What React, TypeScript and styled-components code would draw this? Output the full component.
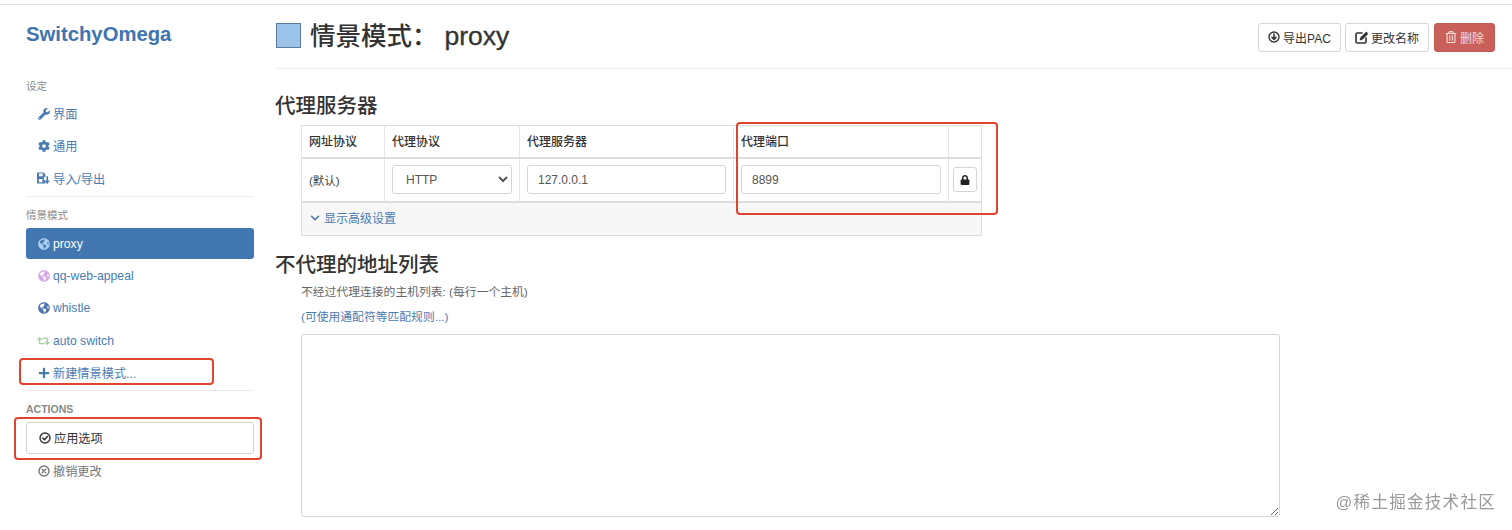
import React from 'react';
import styled, { createGlobalStyle } from 'styled-components';
import { FaWrench, FaCog, FaGlobeAmericas, FaRetweet, FaPlus, FaChevronDown, FaLock, FaRegTrashAlt } from 'react-icons/fa';

const FONT = `"Liberation Sans", "Noto Sans CJK SC", sans-serif`;

const Global = createGlobalStyle`
  html, body { margin: 0; padding: 0; background: #fff; overflow: hidden; height: 530px; }
  body { font-family: ${FONT}; color: #333; font-size: 12px; }
  * { box-sizing: border-box; }
`;

const Page = styled.div`
  margin-top: 4px;
  border-top: 1px solid #e2e2e2;
  display: flex;
  height: 525px;
  overflow: hidden;
`;

const Sidebar = styled.aside`
  width: 275px;
  flex: none;
  padding: 0 21px 0 26px;
`;

const Logo = styled.h1`
  margin: 17px 0 0;
  font-size: 20.3px;
  line-height: 25px;
  font-weight: 700;
  color: #3f74ae;
`;

const SectionLabel = styled.div<{ $top: number }>`
  margin-top: ${p => p.$top}px;
  font-size: 10.5px;
  line-height: 14px;
  color: #8a8a8a;
  height: 14px;
`;

const Divider = styled.hr<{ $top: number }>`
  margin: ${p => p.$top}px 0 0;
  border: 0;
  border-top: 1px solid #ececec;
  width: 228px;
`;

const Nav = styled.nav<{ $top: number }>`
  display: flex;
  flex-direction: column;
  width: 228px;
  margin-top: ${p => p.$top}px;
`;

const NavItem = styled.a<{ $active?: boolean; $muted?: boolean }>`
  position: relative;
  display: flex;
  align-items: center;
  gap: 3px;
  height: ${p => (p.$active ? '31px' : '32.3px')};
  margin-bottom: ${p => (p.$active ? '1px' : '0')};
  padding: ${p => (p.$active ? '1px 0 0 11px' : '0 0 0 11px')};
  font-size: 12.2px;
  border-radius: 3px;
  color: ${p => (p.$active ? '#fff' : p.$muted ? '#777' : '#4a7cb2')};
  background: ${p => (p.$active ? '#4277b1' : 'transparent')};
`;

const IconSlot = styled.span<{ $color?: string }>`
  width: 13px;
  height: 13px;
  display: inline-flex;
  align-items: center;
  justify-content: center;
  flex: none;
  color: ${p => p.$color || 'inherit'};
  font-size: 12px;
`;

const ApplyButton = styled.button`
  position: relative;
  display: flex;
  align-items: center;
  gap: 3px;
  width: 228px;
  height: 32px;
  margin-top: 6px;
  padding: 0 0 0 11px;
  font: 12.2px ${FONT};
  color: #333;
  background: #fff;
  border: 1px solid #d5d5d5;
  border-radius: 3px;
`;

const MutedRow = styled(NavItem)`
  width: 228px;
  margin-top: 1px;
`;

const Highlight = styled.span<{ $l: number; $t: number; $w: number; $h: number }>`
  position: absolute;
  left: ${p => p.$l}px;
  top: ${p => p.$t}px;
  width: ${p => p.$w}px;
  height: ${p => p.$h}px;
  border: 2px solid #e0442c;
  border-radius: 4px;
  pointer-events: none;
`;

const Main = styled.main`
  flex: 1;
  min-width: 0;
  padding-right: 17px;
`;

const Header = styled.header`
  display: flex;
  align-items: center;
  height: 64px;
  padding-top: 3px;
  margin-left: 1px;
  margin-right: -17px;
  padding-right: 17px;
  border-bottom: 1px solid #ececec;
`;

const Swatch = styled.span`
  width: 25px;
  height: 25px;
  margin-right: 9px;
  margin-top: -5px;
  background: #9cc4e8;
  border: 1px solid #5b7c9c;
  flex: none;
`;

const Title = styled.h2`
  margin: -4px 0 0;
  flex: 1;
  font-size: 25.5px;
  font-weight: 500;
  color: #333;
  line-height: 30px;
  display: flex;
`;

const TitleName = styled.span`
  margin-left: 7px;
  font-size: 26.5px;
  -webkit-text-stroke: 0.35px #333;
`;

const Actions = styled.div`
  display: flex;
  gap: 4px;
  margin-top: -2px;
`;

const ActionButton = styled.button<{ $danger?: boolean; $w: number }>`
  width: ${p => p.$w}px;
  height: 29px;
  display: flex;
  align-items: center;
  justify-content: center;
  gap: 3px;
  padding: 0;
  margin-left: ${p => (p.$danger ? '1px' : '0')};
  font: 12px ${FONT};
  border-radius: 3px;
  color: ${p => (p.$danger ? '#f4dcda' : '#333')};
  background: ${p => (p.$danger ? '#c9605a' : '#fff')};
  border: 1px solid ${p => (p.$danger ? '#c25a54' : '#d5d5d5')};
`;

const SectionTitle = styled.h3<{ $top: number }>`
  margin: ${p => p.$top}px 0 0;
  font-size: 20.5px;
  line-height: 26px;
  font-weight: 500;
  color: #333;
`;

const Indent = styled.div`
  margin-left: 26px;
  position: relative;
`;

const ProxyTable = styled.table`
  width: 680px;
  margin-top: 6px;
  border-collapse: collapse;
  table-layout: fixed;
  border: 1px solid #ddd;
  font-size: 12px;
`;

const Th = styled.th<{ $w: number }>`
  width: ${p => p.$w}px;
  height: 32px;
  padding: 0 7px 2px;
  text-align: left;
  font-size: 12px;
  font-weight: 500;
  color: #333;
  border-left: 1px solid #e6e6e6;
  border-bottom: 2px solid #ddd;
`;

const Td = styled.td`
  height: 44px;
  padding: 0 7px;
  color: #444;
  border-left: 1px solid #e6e6e6;
  border-bottom: 2px solid #ddd;
  font-size: 11.5px;
`;

const FooterCell = styled.td`
  height: 34px;
  padding: 0 0 2px 8px;
  background: #f7f7f7;
`;

const Expand = styled.a`
  display: inline-flex;
  align-items: center;
  gap: 4px;
  color: #4a7cb2;
  font-size: 12px;
`;

const NativeSelect = styled.select`
  width: 120px;
  height: 29px;
  padding-left: 9px;
  font: 12px ${FONT};
  color: #555;
  background: #fff;
  border: 1px solid #d5d5d5;
  border-radius: 3px;
  display: block;
`;

const TextInput = styled.input`
  width: 100%;
  height: 29px;
  padding: 0 10px;
  font: 12px ${FONT};
  color: #555;
  background: #fff;
  border: 1px solid #d5d5d5;
  border-radius: 3px;
  display: block;
`;

const LockButton = styled.button`
  width: 24px;
  height: 25px;
  padding: 0;
  margin-left: -3px;
  display: flex;
  align-items: center;
  justify-content: center;
  color: #222;
  background: #fff;
  border: 1px solid #d5d5d5;
  border-radius: 3px;
  font-size: 10px;
`;

const Help = styled.p`
  margin: 6px 0 0;
  font-size: 11.8px;
  line-height: 16px;
  color: #666;
`;

const HelpLink = styled.a`
  display: block;
  margin-top: 9px;
  font-size: 11.8px;
  line-height: 16px;
  color: #4a7cb2;
`;

const Area = styled.textarea`
  display: block;
  width: 979px;
  height: 183px;
  margin-top: 9px;
  border: 1px solid #d5d5d5;
  border-radius: 3px;
  background: #fff;
`;

const Watermark = styled.div`
  position: fixed;
  right: 16px;
  bottom: 17px;
  font-size: 16.5px;
  line-height: 22px;
  color: #9a9a9a;
  letter-spacing: 1.3px;
`;

const Circled: React.FC<{ kind: 'ok' | 'x' | 'down' }> = ({ kind }) => (
  <svg width="12" height="12" viewBox="0 0 12 12" fill="none" stroke="currentColor" strokeWidth="1.4" strokeLinecap="round" strokeLinejoin="round">
    <circle cx="6" cy="6" r="5" />
    {kind === 'ok' && <path d="M3.6 6l1.8 1.8 3-3.2" strokeWidth="1.5" />}
    {kind === 'x' && <path d="M4.2 4.2l3.6 3.6M7.8 4.2L4.2 7.8" />}
    {kind === 'down' && <path d="M6 3v5.2M4 6.4l2 2 2-2" strokeWidth="1.5" />}
  </svg>
);

const EditIcon = () => (
  <svg width="13" height="13" viewBox="0 0 13 13" fill="none" stroke="currentColor" strokeWidth="1.6" strokeLinecap="round" strokeLinejoin="round">
    <path d="M7 2H2.2A1.2 1.2 0 0 0 1 3.2v7.6A1.2 1.2 0 0 0 2.2 12h7.6a1.2 1.2 0 0 0 1.2-1.2V7" />
    <path d="M11.5 1.6L6.2 6.9 5.6 8.4l1.5-.6 5-5" strokeWidth="1.7" />
  </svg>
);

const ImportExportIcon = () => (
  <svg width="14" height="13" viewBox="0 0 14 13" fill="currentColor">
    <path fillRule="evenodd" d="M0 0h7l2 2v3H7.5v3.5H9V12H0zM2.2 1v3h4V1zM2 7h3.8v3.5H2z" />
    <path d="M10.2 4h1.7v4.6h1.9L11 12.6 8.3 8.6h1.9z" />
  </svg>
);

export default function App() {
  return (
    <>
      <Global />
      <Page>
        <Sidebar>
          <Logo>SwitchyOmega</Logo>
          <SectionLabel $top={32}>设定</SectionLabel>
          <Nav $top={5}>
            <NavItem><IconSlot><FaWrench /></IconSlot>界面</NavItem>
            <NavItem><IconSlot><FaCog /></IconSlot>通用</NavItem>
            <NavItem><IconSlot><ImportExportIcon /></IconSlot>导入/导出</NavItem>
          </Nav>
          <Divider $top={1} />
          <SectionLabel $top={11}>情景模式</SectionLabel>
          <Nav $top={6}>
            <NavItem $active><IconSlot $color="#a9d0f0"><FaGlobeAmericas /></IconSlot>proxy</NavItem>
            <NavItem><IconSlot $color="#d5a6e6"><FaGlobeAmericas /></IconSlot>qq-web-appeal</NavItem>
            <NavItem><IconSlot $color="#4f74b0"><FaGlobeAmericas /></IconSlot>whistle</NavItem>
            <NavItem><IconSlot $color="#9fd19f"><FaRetweet size={16} /></IconSlot>auto switch</NavItem>
            <NavItem><IconSlot><FaPlus /></IconSlot>新建情景模式...
              <Highlight $l={-7} $t={1} $w={195} $h={27} />
            </NavItem>
          </Nav>
          <Divider $top={1} />
          <SectionLabel $top={11}><b>ACTIONS</b></SectionLabel>
          <ApplyButton><IconSlot><Circled kind="ok" /></IconSlot>应用选项
            <Highlight $l={-13} $t={-6} $w={248} $h={43} />
          </ApplyButton>
          <MutedRow $muted><IconSlot><Circled kind="x" /></IconSlot>撤销更改</MutedRow>
        </Sidebar>
        <Main>
          <Header>
            <Swatch />
            <Title>情景模式：<TitleName>proxy</TitleName></Title>
            <Actions>
              <ActionButton $w={83}><Circled kind="down" />导出PAC</ActionButton>
              <ActionButton $w={84}><EditIcon />更改名称</ActionButton>
              <ActionButton $w={61} $danger><FaRegTrashAlt size={12} />删除</ActionButton>
            </Actions>
          </Header>
          <SectionTitle $top={24}>代理服务器</SectionTitle>
          <Indent>
            <ProxyTable>
              <thead>
                <tr>
                  <Th $w={83}>网址协议</Th>
                  <Th $w={135}>代理协议</Th>
                  <Th $w={214}>代理服务器</Th>
                  <Th $w={215}>代理端口</Th>
                  <Th $w={33} />
                </tr>
              </thead>
              <tbody>
                <tr>
                  <Td>(默认)</Td>
                  <Td><NativeSelect defaultValue="HTTP"><option>HTTP</option></NativeSelect></Td>
                  <Td><TextInput defaultValue="127.0.0.1" /></Td>
                  <Td><TextInput defaultValue="8899" /></Td>
                  <Td><LockButton><FaLock /></LockButton></Td>
                </tr>
                <tr>
                  <FooterCell colSpan={5}>
                    <Expand><FaChevronDown size={10} />显示高级设置</Expand>
                  </FooterCell>
                </tr>
              </tbody>
            </ProxyTable>
            <Highlight $l={435} $t={-3} $w={262} $h={93} />
          </Indent>
          <SectionTitle $top={16}>不代理的地址列表</SectionTitle>
          <Indent>
            <Help>不经过代理连接的主机列表: (每行一个主机)</Help>
            <HelpLink>(可使用通配符等匹配规则...)</HelpLink>
            <Area />
          </Indent>
        </Main>
      </Page>
      <Watermark>@稀土掘金技术社区</Watermark>
    </>
  );
}
